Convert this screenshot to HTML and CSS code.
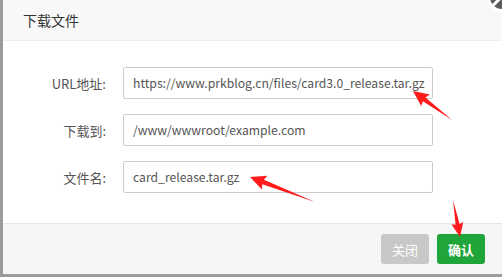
FILE: index.html
```html
<!DOCTYPE html>
<html>
<head>
<meta charset="utf-8">
<link rel="stylesheet" href="styles.css">
</head>
<body>
<div class="page">
  <div class="dialog">
    <div class="header">下载文件</div>
    <span class="close"><span class="close-x"></span></span>
    <div class="content">
      <div class="row">
        <label class="label">URL地址:</label>
        <div class="input">https://www.prkblog.cn/files/card3.0_release.tar.gz</div>
      </div>
      <div class="row">
        <label class="label">下载到:</label>
        <div class="input">/www/wwwroot/example.com</div>
      </div>
      <div class="row">
        <label class="label">文件名:</label>
        <div class="input">card_release.tar.gz</div>
      </div>
    </div>
    <div class="footer">
      <button class="btn btn-close">关闭</button>
      <button class="btn btn-ok">确认</button>
    </div>
  </div>
  <svg class="arrows" width="502" height="277" viewBox="0 0 502 277">
    <g fill="#ff1b1b">
      <g transform="translate(452,120) rotate(-143.4)">
        <polygon points="0,0 34.6,-2.2 33,-7.2 48.6,0 33,7.2 34.6,2.2"/>
      </g>
      <g transform="translate(315,202) rotate(-158.96)">
        <polygon points="0,0 55.6,-2.4 54,-7.4 69.6,0 54,7.4 55.6,2.4"/>
      </g>
      <g transform="translate(453,200) rotate(79.3)">
        <polygon points="0,0 24.7,-2 23.5,-6 37.7,0 23.5,6 24.7,2"/>
      </g>
    </g>
  </svg>
</div>
</body>
</html>
```
FILE: styles.css
```css
html, body {
  margin: 0;
  padding: 0;
}
body {
  width: 502px;
  height: 277px;
  overflow: hidden;
  background: #9b9b9b;
  font-family: "Noto Sans CJK SC", "Open Sans", sans-serif;
}
.page {
  position: relative;
  width: 502px;
  height: 277px;
  overflow: hidden;
}
.dialog {
  position: relative;
  margin-left: 3px;
  width: 530px;
  height: 274px;
  background: #fff;
  display: flex;
  flex-direction: column;
}
.header {
  height: 41px;
  box-sizing: border-box;
  line-height: 41px;
  padding-left: 20px;
  background: #f8f8f8;
  border-bottom: 1px solid #eee;
  font-size: 14px;
  color: #333;
}
.close {
  position: absolute;
  left: 484px;
  top: -18px;
  width: 30px;
  height: 30px;
  border-radius: 50%;
  background: #5b5b5b;
  border: 3px solid #fff;
  box-sizing: border-box;
}
.close-x {
  position: absolute;
  left: 1px;
  top: 16px;
  width: 10px;
  height: 3px;
  background: #fff;
  transform: rotate(-45deg);
}
.content {
  padding: 26px 0 30px 0;
  display: flex;
  flex-direction: column;
  gap: 15px;
}
.row {
  display: flex;
  align-items: center;
  height: 32px;
}
.label {
  width: 103px;
  text-align: right;
  font-size: 13px;
  color: #555;
  padding-right: 17px;
}
.input {
  width: 310px;
  height: 32px;
  box-sizing: border-box;
  border: 1px solid #ccc;
  border-radius: 2px;
  padding-left: 9px;
  line-height: 30px;
  font-size: 12.2px;
  color: #555;
  white-space: nowrap;
  overflow: hidden;
}
.footer {
  flex: 1;
  background: #f5f6f6;
  border-top: 1px solid #e6e6e6;
  display: flex;
  justify-content: flex-start;
  align-items: flex-start;
  padding: 10px 0 0 378px;
  gap: 8px;
}
.btn {
  width: 48px;
  height: 30px;
  border: none;
  border-radius: 3px;
  color: #fff;
  font-size: 13px;
  font-family: "Noto Sans CJK SC", sans-serif;
  padding: 0;
}
.btn-close {
  background: #c8c8c8;
}
.btn-ok {
  background: #20a53a;
  font-weight: bold;
}
.arrows {
  position: absolute;
  left: 0;
  top: 0;
}
```
